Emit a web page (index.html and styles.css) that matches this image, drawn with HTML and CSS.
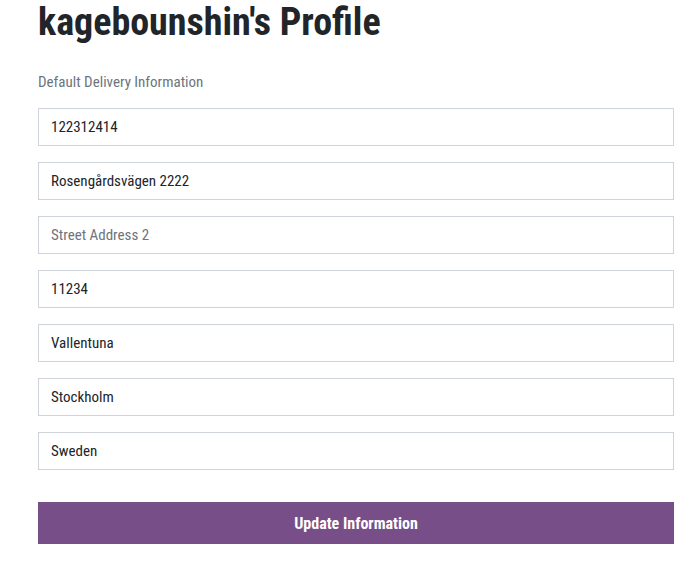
FILE: index.html
```html
<!DOCTYPE html>
<html>
<head>
<meta charset="utf-8">
<link rel="stylesheet" href="styles.css">
</head>
<body>
<div class="page">
  <h1 class="title">kagebounshin's Profile</h1>
  <p class="subtitle">Default Delivery Information</p>
  <form class="form">
    <input class="field" type="text" value="122312414">
    <input class="field" type="text" value="Rosengårdsvägen 2222">
    <input class="field" type="text" placeholder="Street Address 2">
    <input class="field" type="text" value="11234">
    <input class="field" type="text" value="Vallentuna">
    <input class="field" type="text" value="Stockholm">
    <input class="field" type="text" value="Sweden">
    <button class="btn" type="button">Update Information</button>
  </form>
</div>
</body>
</html>
```
FILE: styles.css
```css
html, body {
  margin: 0;
  padding: 0;
  background: #fff;
}
.page {
  padding: 0 23px 0 38px;
  font-family: "Roboto Condensed", "Open Sans", sans-serif;
  color: #212529;
}
.title {
  margin: 0;
  font-size: 38px;
  line-height: 45px;
  font-weight: 700;
  color: #212529;
}
.subtitle {
  margin: 27px 0 0;
  font-size: 15px;
  line-height: 20px;
  color: #6c757d;
}
.form {
  display: flex;
  flex-direction: column;
  gap: 16px;
  margin-top: 16px;
}
.field {
  box-sizing: border-box;
  height: 38px;
  width: 100%;
  border: 1px solid #ced4da;
  border-radius: 0;
  padding: 0 12px;
  font-family: inherit;
  font-size: 15px;
  color: #212529;
  background: #fff;
  outline: none;
}
.field::placeholder {
  color: #6c757d;
}
.btn {
  margin-top: 16px;
  height: 42px;
  width: 100%;
  border: 0;
  border-radius: 0;
  background: #774e87;
  color: #fff;
  font-family: inherit;
  font-weight: 700;
  font-size: 16px;
}
```
